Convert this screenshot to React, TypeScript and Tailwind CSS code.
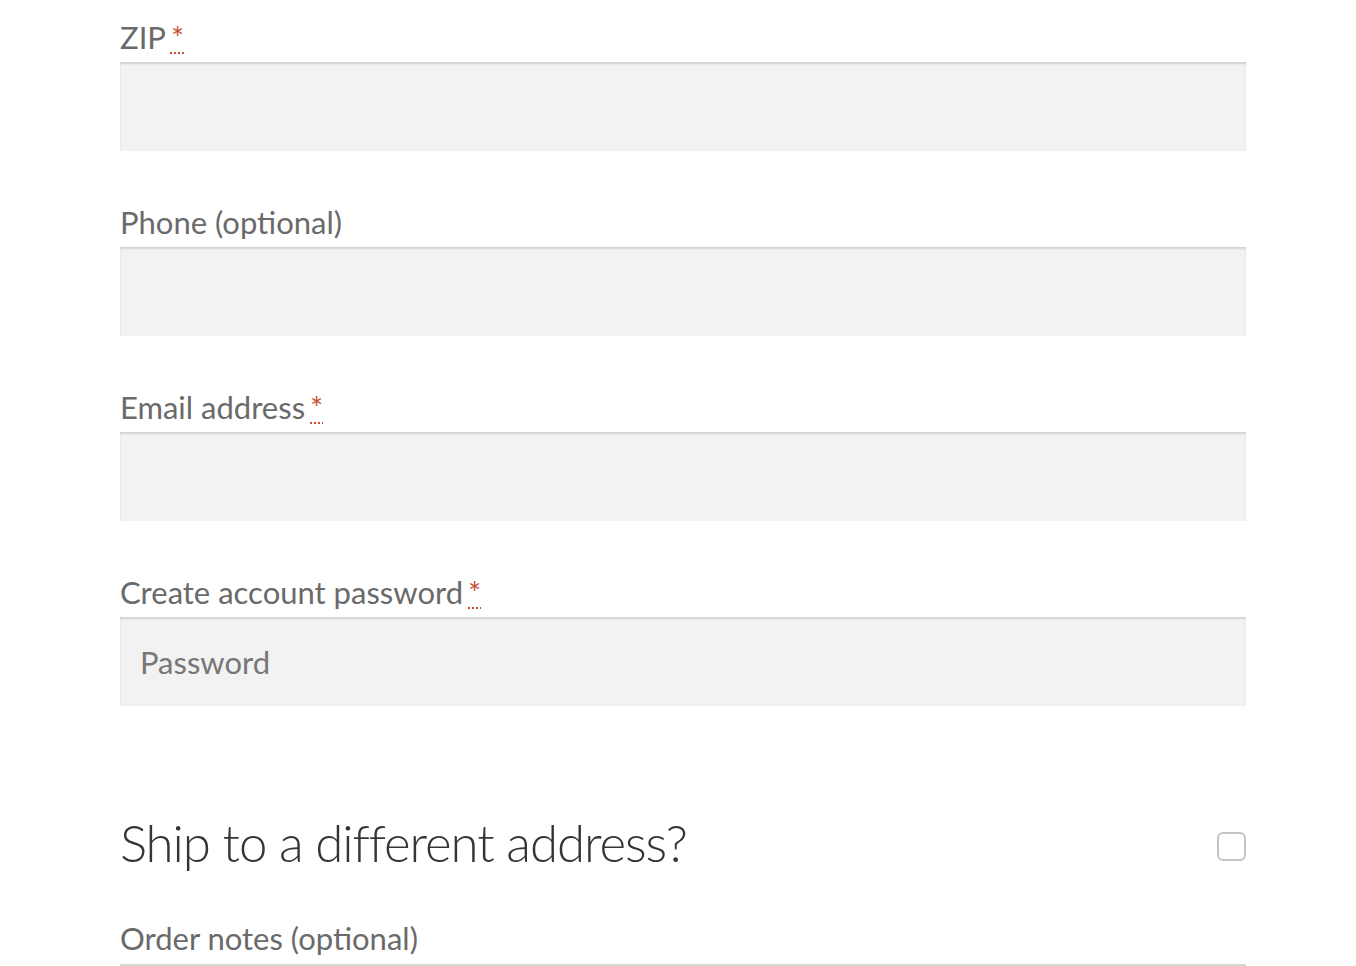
const font = { fontFamily: '"Source Sans Pro", Lato, "Open Sans", sans-serif' };

function Required() {
  return (
    <abbr
      title="required"
      className="ml-[5px] text-[#c9513a] underline decoration-dotted decoration-2 decoration-[#c9513a] underline-offset-[3px]"
    >
      *
    </abbr>
  );
}

function Field({ label, required, placeholder }: { label: string; required?: boolean; placeholder?: string }) {
  return (
    <div className="mb-[53px]">
      <label className="block text-[31px] leading-[36px] text-[#6a6a6a] mb-[7px]">
        {label}
        {required && <Required />}
      </label>
      <input
        className="block w-full h-[89px] bg-[#f2f2f2] px-[20px] text-[31px] text-[#6a6a6a] placeholder:text-[#777] shadow-[inset_0_2px_2px_rgba(0,0,0,0.13)] outline-none"
        placeholder={placeholder}
        style={font}
      />
    </div>
  );
}

export default function App() {
  return (
    <div className="min-h-screen bg-white overflow-hidden" style={font}>
      <div className="ml-[120px] w-[1126px] pt-[19px]">
        <Field label="ZIP" required />
        <Field label="Phone (optional)" />
        <Field label="Email address" required />
        <Field label="Create account password" required placeholder="Password" />
        <div className="flex items-start justify-between mt-[105px]">
          <h3 className="text-[51px] font-light leading-[64px] tracking-[-1.1px] text-[#353535]">
            Ship to a different address?
          </h3>
          <input
            type="checkbox"
            className="appearance-none mt-[21px] w-[29px] h-[29px] rounded-[6px] border-2 border-[#c4c4c4] bg-white"
          />
        </div>
        <label className="block mt-[45px] text-[31px] leading-[36px] text-[#6a6a6a] pb-[8px] border-b-2 border-[#d6d6d6]">
          Order notes (optional)
        </label>
      </div>
    </div>
  );
}
